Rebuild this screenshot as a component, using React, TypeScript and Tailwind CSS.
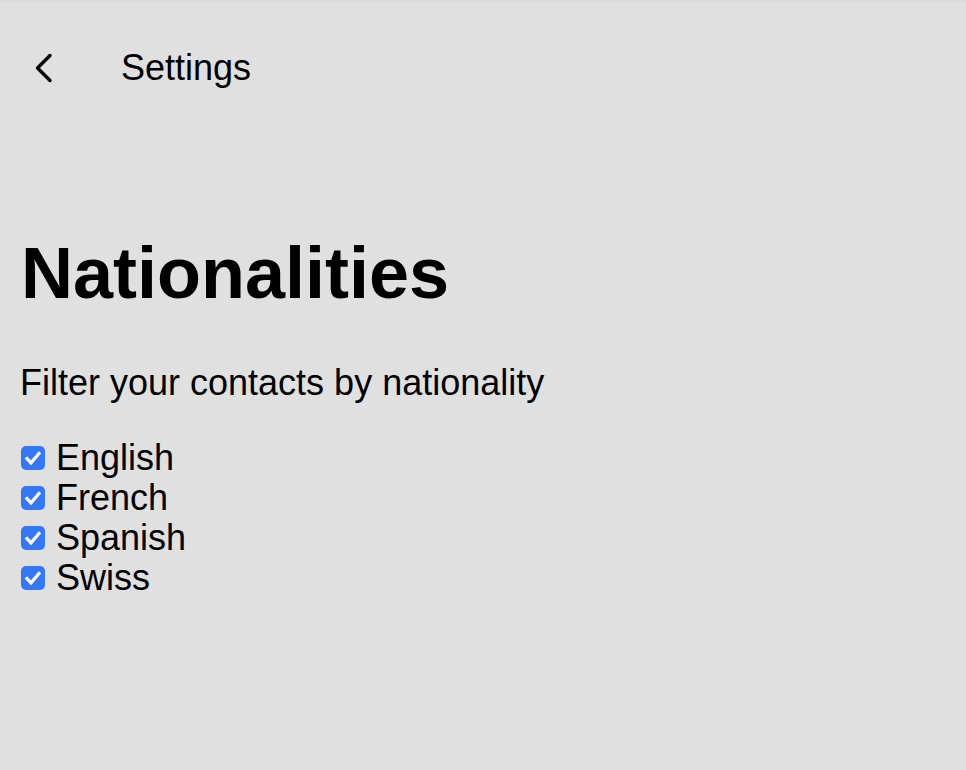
import React from "react";

const items = ["English", "French", "Spanish", "Swiss"];

function Check() {
  return (
    <span className="flex h-[24px] w-[24px] shrink-0 items-center justify-center rounded-[5px] bg-[#3478f6]">
      <svg width="24" height="24" viewBox="0 0 24 24" fill="none">
        <polyline
          points="6,12.5 10,16.8 18,7.5"
          stroke="#ffffff"
          strokeWidth="3.2"
          strokeLinecap="square"
          strokeLinejoin="miter"
        />
      </svg>
    </span>
  );
}

export default function App() {
  return (
    <div className="min-h-screen bg-[#e0e0e0] font-['Liberation_Sans',Arial,sans-serif] text-black">
      <div className="h-[2px] bg-[#dbdae1]" />
      <div className="mt-[46px] flex h-[40px] items-center">
        <div className="ml-[34px] flex w-[20px] items-center justify-center">
          <svg width="20" height="30" viewBox="0 0 20 30" fill="none">
            <polyline points="16,2.5 3.5,15 16,27.5" stroke="#000" strokeWidth="3.4" strokeLinecap="round" strokeLinejoin="round" />
          </svg>
        </div>
        <span className="ml-[67px] text-[36px] leading-[40px]">Settings</span>
      </div>
      <div className="pl-[20px]">
        <h1 className="mt-[145px] ml-[1px] text-[72px] font-bold leading-[80px]">Nationalities</h1>
        <p className="mt-[50px] text-[36px] leading-[40px]">Filter your contacts by nationality</p>
        <ul className="mt-[35px] flex flex-col">
          {items.map((it) => (
            <li key={it} className="flex h-[40px] items-center">
              <span className="ml-[1px]"><Check /></span>
              <span className="ml-[11px] text-[36px] leading-[40px]">{it}</span>
            </li>
          ))}
        </ul>
      </div>
    </div>
  );
}
